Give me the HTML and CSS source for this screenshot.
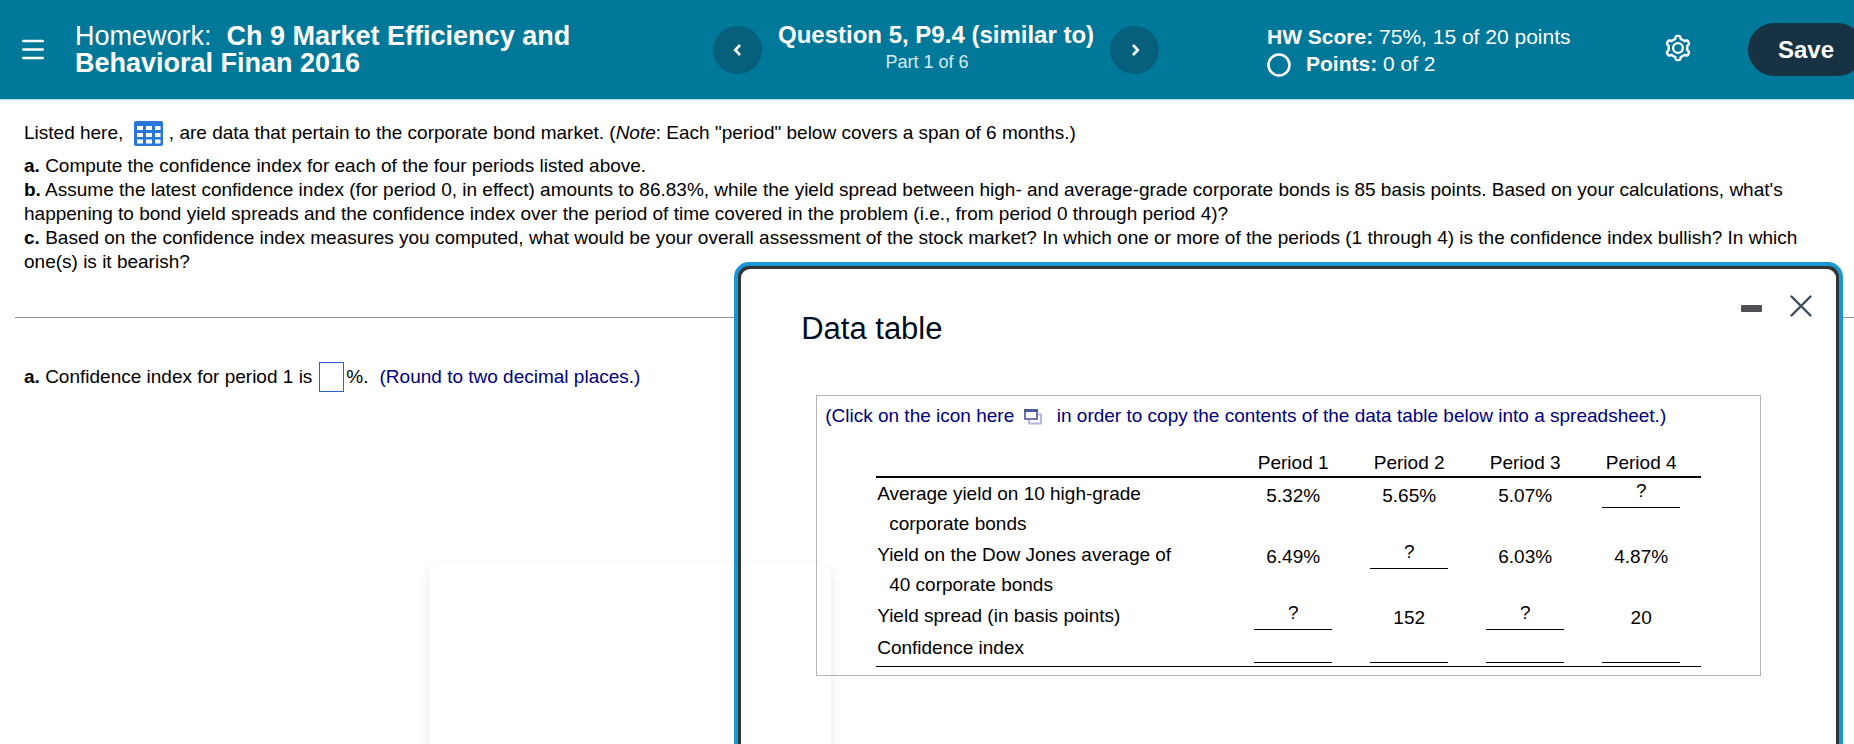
FILE: index.html
```html
<!DOCTYPE html>
<html lang="en">
<head>
<meta charset="utf-8">
<title>Homework: Ch 9 Market Efficiency and Behavioral Finan 2016</title>
<link rel="stylesheet" href="styles.css">
</head>
<body>
<header class="topbar">
  <button class="icon-button menu" aria-label="Menu">
    <svg width="22" height="22" viewBox="0 0 22 22" stroke="currentColor" stroke-width="2.4" stroke-linecap="round"><path d="M1.2 2h19.6M1.2 10.500h19.6M1.200 19h19.6"/></svg>
  </button>
  <h1 class="assignment"><span class="kind">Homework:&nbsp; </span>Ch 9 Market Efficiency and<br>Behavioral Finan 2016</h1>
  <nav class="question-nav">
    <button class="round" aria-label="Previous question">
      <svg width="12" height="14" viewBox="0 0 12 14" fill="none" stroke="currentColor" stroke-width="2.6"><path d="M8 2 3.200 7 8 12"/></svg>
    </button>
    <div class="question">
      <h2 class="question-title">Question 5, P9.4 (similar to)</h2>
      <p class="part">Part 1 of 6</p>
    </div>
    <button class="round" aria-label="Next question">
      <svg width="12" height="14" viewBox="0 0 12 14" fill="none" stroke="currentColor" stroke-width="2.6"><path d="M4 2 8.800 7 4 12"/></svg>
    </button>
  </nav>
  <div class="score">
    <p><b>HW Score:</b> 75%, 15 of 20 points</p>
    <p class="points"><svg width="24" height="24" viewBox="0 0 24 24" fill="none" stroke="currentColor" stroke-width="2.600"><circle cx="12" cy="12" r="10.500"/></svg><span><b>Points:</b> 0 of 2</span></p>
  </div>
  <button class="icon-button settings" aria-label="Settings">
    <svg width="28" height="28" viewBox="0 0 28 28" fill="none" stroke="currentColor" stroke-width="2.400" stroke-linejoin="round"><path d="M11.200 4.900 11.700 3Q12 1.900 13 1.900H15Q16 1.900 16.300 3L16.800 4.900 20.500 7.050 22.200 6.500Q23.300 6.200 23.900 7.200L24.900 8.900Q25.400 9.900 24.600 10.700L23.300 11.900V16.100L24.600 17.300Q25.400 18.100 24.900 19.100L23.900 20.800Q23.300 21.800 22.200 21.500L20.500 20.950 16.800 23.100 16.300 25Q16 26.100 15 26.100H13Q12 26.100 11.700 25L11.200 23.100 7.500 20.950 5.800 21.500Q4.700 21.800 4.100 20.800L3.100 19.100Q2.600 18.100 3.400 17.300L4.700 16.100V11.900L3.400 10.700Q2.600 9.900 3.100 8.900L4.100 7.200Q4.700 6.200 5.800 6.500L7.500 7.050Z"/><circle cx="14" cy="14" r="4.900"/></svg>
  </button>
  <button class="save">Save</button>
</header>

<main class="content">
  <section class="problem">
    <p class="intro">Listed here, <button class="data-button" aria-label="Open data table"><svg width="29" height="25" viewBox="0 0 29 25"><rect width="29" height="25" rx="2" fill="#2878dc"/><path fill="#fff" d="M3 5h6v4H3zM12 5h6v4h-6zM21 5h5.500v4H21zM3 12h6v4H3zM12 12h6v4h-6zM21 12h5.500v4H21zM3 18.500h6v4H3zM12 18.500h6v4h-6zM21 18.500h5.500v4H21z"/></svg></button> , are data that pertain to the corporate bond market. (<i>Note</i>: Each "period" below covers a span of 6 months.)</p>
    <p><b>a.</b> Compute the confidence index for each of the four periods listed above.</p>
    <p><b>b.</b> Assume the latest confidence index (for period 0, in effect) amounts to 86.83%, while the yield spread between high- and average-grade corporate bonds is 85 basis points. Based on your calculations, what's<br>happening to bond yield spreads and the confidence index over the period of time covered in the problem (i.e., from period 0 through period 4)?</p>
    <p><b>c.</b> Based on the confidence index measures you computed, what would be your overall assessment of the stock market? In which one or more of the periods (1 through 4) is the confidence index bullish? In which<br>one(s) is it bearish?</p>
  </section>
  <hr class="divider">
  <form class="answer">
    <label for="ci1"><b>a.</b> Confidence index for period 1 is</label>
    <input id="ci1" class="answer-box" type="text">
    <span>%.</span>
    <span class="hint">(Round to two decimal places.)</span>
  </form>
</main>

<section class="dialog" role="dialog" aria-labelledby="dialog-title">
  <div class="dialog-head">
    <h2 id="dialog-title" class="dialog-title">Data table</h2>
    <div class="dialog-tools">
      <button class="icon-button" aria-label="Minimize"><svg width="22" height="22" viewBox="0 0 22 22"><rect y="10" width="21" height="7" rx="1" fill="#505054"/></svg></button>
      <button class="icon-button" aria-label="Close"><svg width="22" height="22" viewBox="0 0 22 22" stroke="#3c4a5a" stroke-width="2.400" stroke-linecap="round"><path d="M1.500 1.500 20.500 20.500M20.500 1.500 1.500 20.500"/></svg></button>
    </div>
  </div>
  <div class="sheet">
    <p class="hint copy-line">(Click on the icon here <button class="copy-button" aria-label="Copy to spreadsheet"><svg width="18" height="16" viewBox="0 0 18 16" fill="none"><path d="M14 5.500h3v9H5V11" stroke="#b4b8dc" stroke-width="2"/><rect x="1" y="1" width="12" height="9" fill="#fff" stroke="#6a76b4" stroke-width="2"/><path d="M0 1.500h14" stroke="#4a5a9c" stroke-width="3"/></svg></button> in order to copy the contents of the data table below into a spreadsheet.)</p>
    <table class="yields">
      <thead>
        <tr><td></td><th>Period 1</th><th>Period 2</th><th>Period 3</th><th>Period 4</th><td class="end"></td></tr>
      </thead>
      <tbody>
        <tr><th>Average yield on 10 high-grade<br><span class="indent">corporate bonds</span></th><td>5.32%</td><td>5.65%</td><td>5.07%</td><td><span class="blank">?</span></td><td></td></tr>
        <tr><th>Yield on the Dow Jones average of<br><span class="indent">40 corporate bonds</span></th><td>6.49%</td><td><span class="blank">?</span></td><td>6.03%</td><td>4.87%</td><td></td></tr>
        <tr><th>Yield spread (in basis points)</th><td><span class="blank">?</span></td><td>152</td><td><span class="blank">?</span></td><td>20</td><td></td></tr>
        <tr class="last"><th>Confidence index</th><td><span class="blank"></span></td><td><span class="blank"></span></td><td><span class="blank"></span></td><td><span class="blank"></span></td><td></td></tr>
      </tbody>
    </table>
  </div>
</section>
<div class="ghost-panel"></div>
</body>
</html>
```
FILE: styles.css
```css
* { box-sizing: border-box; }
html, body { height: 100%; }
body {
  margin: 0;
  position: relative;
  overflow: hidden;
  background: #fff;
  color: #000;
  font: 19px/24px "Liberation Sans", Arial, sans-serif;
}
h1, h2, p { margin: 0; font-weight: normal; }
button { font: inherit; color: inherit; border: 0; padding: 0; background: none; cursor: pointer; }
svg { display: block; }

.topbar {
  display: grid;
  grid-template-columns: 75px 638fr 554fr 397fr 84px 106px;
  align-items: center;
  height: 100px;
  border-bottom: 1px solid #c4d4e0;
  background: #007899;
  color: #fff;
}
.icon-button { display: flex; }
.menu { padding-left: 22px; }
.settings { padding-bottom: 3px; }
.assignment { font-size: 27px; line-height: 27px; font-weight: bold; }
.kind { font-weight: normal; }
.question-nav { display: flex; gap: 16px; align-items: center; }
.round {
  display: flex;
  align-items: center;
  justify-content: center;
  width: 49px;
  height: 48px;
  border-radius: 50%;
  background: #06607c;
}
.question { text-align: center; padding-bottom: 3px; }
.question-title { font-size: 24px; line-height: 28px; font-weight: bold; }
.part { padding-right: 18px; font-size: 18px; line-height: 26px; color: #d8eaf2; }
.score { font-size: 21px; line-height: 27px; }
.points { display: flex; gap: 15px; align-items: center; }
.points svg { margin-top: 3px; }
.save {
  width: 116px;
  height: 53px;
  border-radius: 27px;
  background: #163243;
  font-size: 24px;
  font-weight: bold;
}

.problem { padding: 18px 0 0 24px; white-space: nowrap; }
.intro { line-height: 30px; padding-bottom: 6px; }
.data-button, .copy-button { display: inline-block; vertical-align: middle; }
.data-button { margin: 0 1px 0 5px; }
.divider { margin: 43px 0 0 15px; border: 0; border-top: 1px solid #8c94a8; }
.answer { display: flex; align-items: center; padding: 44px 0 0 24px; }
.answer-box {
  width: 25px;
  height: 30px;
  margin: 0 2px 0 7px;
  padding: 0 2px;
  border: 1px solid #2a64c8;
  font: inherit;
}
.hint { color: #000080; }
.answer .hint { margin-left: 11px; }

.dialog {
  position: absolute;
  top: 262px;
  left: 39.6%;
  right: 11px;
  bottom: -20px;
  border: 4px solid #1a96d4;
  border-radius: 15px;
  background: #333;
  padding: 3px;
}
.dialog::before {
  content: "";
  position: absolute;
  inset: 3px;
  border-radius: 9px;
  background: #fff;
}
.dialog-head, .sheet { position: relative; }
.dialog-head { display: flex; justify-content: space-between; padding: 26px 24px 0 60px; }
.dialog-title { font-size: 31px; line-height: 36px; padding-top: 16px; color: #000c20; }
.dialog-tools { display: flex; align-items: flex-start; gap: 27px; }
.sheet {
  margin: 48px 75px 0;
  padding: 5px 8px 8px;
  border: 1px solid #b4b4b4;
}
.copy-line { line-height: 30px; white-space: nowrap; }
.copy-button { margin: 0 10px 0 4px; }
.yields {
  margin: 19px 0 0 51px;
  width: 825px;
  border-collapse: separate;
  border-spacing: 0;
  table-layout: fixed;
  border-bottom: 1px solid #000;
  line-height: 30px;
}
.yields th, .yields td { padding: 0; font-weight: normal; vertical-align: top; width: 116px; text-align: center; }
.yields thead th, .yields thead td { line-height: 26px; border-bottom: 2px solid #000; }
.yields thead td:first-child { width: auto; }
.yields thead .end { width: 2px; }
.yields tbody th { text-align: left; padding: 1px 0 0 1px; }
.yields tbody td { line-height: 36px; }
.yields tbody td:last-child { width: 2px; }
.indent { padding-left: 12px; }
.blank {
  display: block;
  width: 78px;
  height: 30px;
  margin: 0 auto;
  line-height: 26px;
  border-bottom: 1px solid #000;
}
.yields .last th { line-height: 22px; }
.last .blank { height: 27px; margin-bottom: 3px; }

.ghost-panel {
  position: absolute;
  top: 563px;
  left: 429px;
  width: 402px;
  bottom: -60px;
  border-radius: 12px;
  box-shadow: 0 4px 12px rgba(0, 0, 0, 0.1);
}
```
